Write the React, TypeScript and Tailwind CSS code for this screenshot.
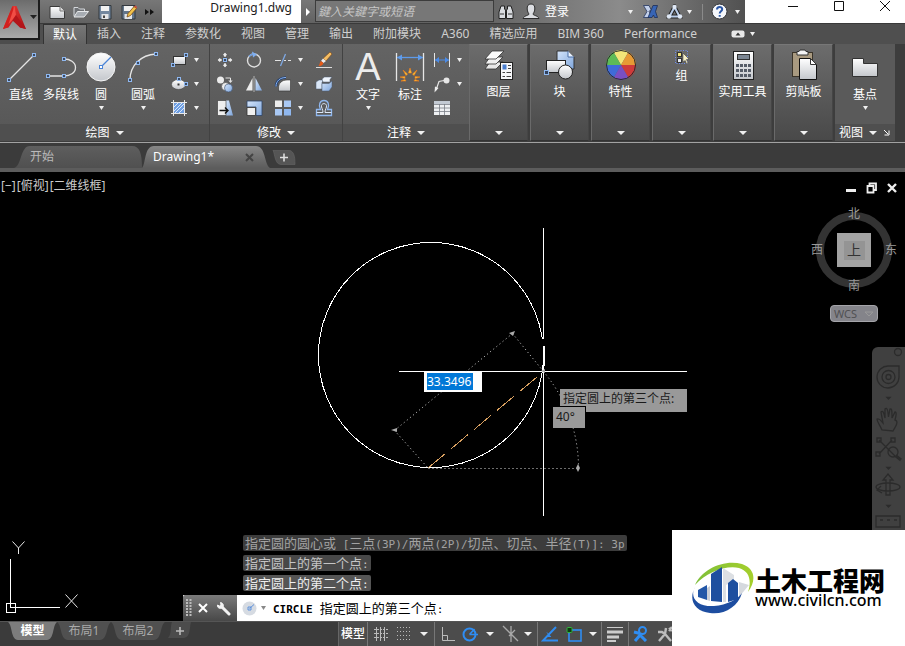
import type { ReactNode } from 'react';

type IconProps = { w?: number; h?: number; children: ReactNode };

function Icon({ w = 18, h = w, children }: IconProps) {
	return (
		<svg width={w} height={h} viewBox={`0 0 ${w} ${h}`} fill="none" className="shrink-0" aria-hidden="true">
			{children}
		</svg>
	);
}

function Caret({ size = 5, color = '#f0f0f0' }: { size?: number; color?: string }) {
	return (
		<svg width={size} height={4} viewBox="0 0 8 5" preserveAspectRatio="none" className="shrink-0" aria-hidden="true">
			<path d="M0 0H8L4 5Z" fill={color} />
		</svg>
	);
}

// Little square grip shown on the end points of drawing icons
function Grip({ x, y }: { x: number; y: number }) {
	return <rect x={x - 1.5} y={y - 1.5} width="3" height="3" fill="#3c4a60" stroke="#8fb8f0" />;
}

function Gradients() {
	return (
		<svg width="0" height="0" className="absolute" aria-hidden="true">
			<defs>
				<linearGradient id="pale" x1="0" y1="0" x2="0" y2="1">
					<stop offset="0" stopColor="#ffffff" />
					<stop offset="1" stopColor="#c4c7cc" />
				</linearGradient>
				<linearGradient id="blue" x1="0" y1="0" x2="1" y2="1">
					<stop offset="0" stopColor="#d5e5fa" />
					<stop offset="1" stopColor="#7fa6dc" />
				</linearGradient>
				<linearGradient id="red" x1="0" y1="0" x2="1" y2="1">
					<stop offset="0" stopColor="#f0403a" />
					<stop offset="1" stopColor="#a80f12" />
				</linearGradient>
				<linearGradient id="tabOn" x1="0" y1="0" x2="0" y2="1">
					<stop offset="0" stopColor="#878787" />
					<stop offset="1" stopColor="#5c5c5c" />
				</linearGradient>
				<linearGradient id="tabOff" x1="0" y1="0" x2="0" y2="1">
					<stop offset="0" stopColor="#5e5e5e" />
					<stop offset="1" stopColor="#505050" />
				</linearGradient>
				<linearGradient id="swoosh" x1="0" y1="0" x2="1" y2="0">
					<stop offset="0" stopColor="#7ebf3a" />
					<stop offset="1" stopColor="#a5cf2c" />
				</linearGradient>
			</defs>
		</svg>
	);
}

/* ---------- title bar ---------- */

const quickTools = [
	{
		label: '新建',
		icon: (
			<Icon w={16}>
				<path d="M1 2.500H11L15.500 7V14.500H1Z" fill="url(#pale)" stroke="#3a3a3a" />
				<path d="M11 2.500V7H15.500" fill="#ddd" stroke="#777" />
			</Icon>
		),
	},
	{
		label: '打开',
		icon: (
			<Icon w={16}>
				<path d="M1 12V3.500H5L6.500 5H11.500V7" fill="#6f7276" stroke="#d5d8dc" />
				<path d="M1 13L4.500 7.500H15.500L11 13Z" fill="#a7acb2" stroke="#e6e8ea" />
			</Icon>
		),
	},
	{
		label: '保存',
		icon: (
			<Icon w={16}>
				<path d="M2 1.500H14V15H2Z" fill="#72879f" stroke="#33383e" />
				<path d="M4 2H12V7H4Z" fill="#f1f1f1" />
				<path d="M4.500 10H11.500V15H4.500Z" fill="#e2e4e7" />
				<path d="M6 11.500H8V14H6Z" fill="#444" />
			</Icon>
		),
	},
	{
		label: '另存为',
		icon: (
			<Icon w={16}>
				<path d="M1 1.500H14V15H1Z" fill="#63758a" stroke="#33383e" />
				<path d="M3 2H12V7H3Z" fill="#f1f1f1" />
				<path d="M3.500 10H11V15H3.500Z" fill="#e2e4e7" />
				<path d="M6 13L7 9.500L13 2.500L15.500 4.500L9.500 11.500Z" fill="#f2c34b" stroke="#7a4a1a" strokeWidth=".8" />
				<path d="M13 2.500L15.500 4.500L16 3L14.500 1.500Z" fill="#d04a3a" />
			</Icon>
		),
	},
];

function TitleBar() {
	return (
		<div className="flex h-[23px] bg-linear-to-b from-[#777] to-[#626262] text-xs">
			<div className="flex w-[122px] shrink-0 items-center gap-2 pl-[9px]">
				{quickTools.map((t) => (
					<button key={t.label} aria-label={t.label}>
						{t.icon}
					</button>
				))}
				<button aria-label="更多">
					<Icon w={9} h={7}>
						<path d="M0 1L4 4L0 7ZM5 1L9 4L5 7Z" fill="#111" />
					</Icon>
				</button>
			</div>
			<h1 className="h-full w-[139px] shrink-0 bg-white pr-[9px] text-right leading-4 text-[#1c1c1c]">Drawing1.dwg</h1>
			<button className="flex w-[14px] shrink-0 items-center justify-center" aria-label="展开搜索">
				<Icon w={4} h={8}>
					<path d="M0 0L4 4L0 8Z" fill="#fff" />
				</Icon>
			</button>
			<input
				aria-label="搜索"
				placeholder="鍵入关鍵字或短语"
				className="h-[22px] w-[180px] border border-[#3c3c3c] bg-[#777] pl-[2px] italic placeholder-[#c6c6c6]"
			/>
			<div className="flex min-w-[251px] flex-1 items-center bg-linear-to-r from-[#666] via-[#8b8b8b] to-[#515151] pl-1">
				<button aria-label="搜索">
					<Icon w={16}>
						<path d="M3 2H6.500V5L7.500 6V14.500H1V8ZM9.500 2H13L15 8V14.500H8.500V6L9.500 5Z" fill="#d9dce0" stroke="#222" />
						<path d="M2 10H6M10 10H14M7 7H9" stroke="#333" />
					</Icon>
				</button>
				<button className="ml-2 flex flex-1 items-center gap-[5px] text-white">
					<Icon w={18} h={17}>
						<path
							d="M9 1C6 1 5 3 5.200 6C5.400 9 6.500 10 7 11C7 12.500 2 12.500 1 15.500H17C16 12.500 11 12.500 11 11C11.500 10 12.600 9 12.800 6C13 3 12 1 9 1Z"
							fill="#dcdee2"
							stroke="#2b2b2b"
						/>
					</Icon>
					<span className="flex-1 text-left leading-4">登录</span>
					<Caret />
				</button>
				<button className="ml-[10px]" aria-label="Exchange">
					<Icon w={15}>
						<path d="M.5 1.500H6L8 5.500L6 7.500L8 10L6 13.500H.5L4 7.500Z" fill="#c3d0ea" stroke="#24365f" strokeWidth=".8" />
						<path d="M14.500 1.500H10L5 13.500H9L10.500 11L11.500 13.500H14.500L12.500 7.500Z" fill="#3865b5" stroke="#1d2f57" strokeWidth=".8" />
					</Icon>
				</button>
				<button className="ml-2 flex items-center gap-1" aria-label="A360">
					<Icon w={17} h={16}>
						<path d="M8.500 3L3.500 12.500H13.500Z" stroke="#222" strokeWidth="4" />
						<path d="M8.500 3L3.500 12.500H13.500Z" stroke="#b9cdea" strokeWidth="2" />
						<circle cx="8.500" cy="3" r="2.200" fill="#dfe8f5" />
						<circle cx="3" cy="12.500" r="2.200" fill="#dfe8f5" />
						<circle cx="14" cy="12.500" r="2.200" fill="#dfe8f5" />
					</Icon>
					<Caret />
				</button>
				<span className="ml-[10px] h-4 w-px bg-[#8a8a8a]" />
				<button className="ml-2 flex items-center gap-[7px] pr-[5px]" aria-label="帮助">
					<Icon w={17}>
						<circle cx="8.500" cy="8.500" r="7.500" fill="#f4f6fa" stroke="#34353a" />
						<path d="M6 6.500C6 3.200 11.200 3.200 11.200 6.300C11.200 8.300 8.700 8.300 8.700 10.500M8.700 12V13.800" stroke="#2a56a5" strokeWidth="2" />
					</Icon>
					<Caret />
				</button>
			</div>
			<div className="flex w-40 shrink-0 items-start justify-end gap-[34px] bg-white pr-[14px]">
				<button aria-label="最小化">
					<Icon w={12}>
						<path d="M1 6.500H11" stroke="#111" />
					</Icon>
				</button>
				<button aria-label="最大化">
					<Icon w={12}>
						<path d="M1.500 1.500H10.500V10.500H1.500Z" stroke="#111" />
					</Icon>
				</button>
				<button aria-label="关闭">
					<Icon w={12}>
						<path d="M1 1L11 11M11 1L1 11" stroke="#111" />
					</Icon>
				</button>
			</div>
		</div>
	);
}

const menuTabs = ['默认', '插入', '注释', '参数化', '视图', '管理', '输出', '附加模块', 'A360', '精选应用', 'BIM 360', 'Performance'];

function Header() {
	return (
		<header className="flex bg-[#4d4d4d]">
			<button
				className="flex h-10 w-10 shrink-0 items-center gap-[3px] border-r-2 border-b-2 border-[#1c1c1c] bg-linear-to-b from-[#6c6c6c] to-[#aaa] pb-1 pl-[2px]"
				aria-label="应用程序菜单"
			>
				<Icon w={25} h={27}>
					<path d="M1 25L10.500 2H14.500L24 25L18 23.500L15.500 19L12.500 15L9.500 19L6.500 23.500Z" fill="url(#red)" />
					<path d="M10.500 2L12 8L6.500 23L1 25Z" fill="#d3201f" />
					<path d="M12.500 2L14 11L9.500 17L6.500 20Z" fill="#f24d45" />
					<path d="M14 11L24 25L18 23.500L10.500 16.500Z" fill="#b3151a" />
				</Icon>
				<Caret size={7} color="#222" />
			</button>
			<div className="min-w-0 flex-1">
				<TitleBar />
				<nav className="flex h-[21px] border-t border-[#3a3a3a] bg-[#4f4f4f] pl-[3px] text-xs text-[#cfcfcf]">
					{menuTabs.map((t, i) => (
						<button
							key={t}
							className={
								i === 0
									? 'h-5 border border-b-0 border-[#333] bg-linear-to-b from-[#777] to-[#646464] px-[9px] leading-[19px] text-white'
									: 'px-[10px] leading-5 whitespace-nowrap'
							}
						>
							{t}
						</button>
					))}
					<button className="ml-6 flex items-center gap-[5px]" aria-label="最小化功能区">
						<Icon w={14} h={8}>
							<rect x=".5" y=".5" width="13" height="7" rx="2" fill="#e9e9e9" />
							<path d="M4.500 5.500L7 2.500L9.500 5.500Z" fill="#333" />
						</Icon>
						<Caret />
					</button>
				</nav>
			</div>
		</header>
	);
}

/* ---------- ribbon ---------- */

function BigTool({ label, icon, caret, wide }: { label: string; icon: ReactNode; caret?: boolean; wide?: boolean }) {
	return (
		<button className={`${wide ? 'w-11' : 'w-10'} flex shrink-0 flex-col items-center`}>
			{icon}
			<span className="mt-1 text-xs leading-4 whitespace-nowrap">{label}</span>
			{caret && (
				<span className="mt-[3px] flex">
					<Caret />
				</span>
			)}
		</button>
	);
}

function SmallTool({ label, icon, caret }: { label: string; icon: ReactNode; caret?: boolean }) {
	return (
		<button className="flex h-6 items-center gap-[6px]" aria-label={label}>
			{icon}
			{caret && <Caret />}
		</button>
	);
}

function PanelTitle({ children }: { children: string }) {
	return (
		<button className="flex h-[17px] w-full items-center justify-center gap-[6px] bg-[#4f4f4f] text-xs leading-[17px]">
			{children}
			<Caret size={8} />
		</button>
	);
}

const lineIcon = (
	<Icon w={32}>
		<path d="M4 29L29 4" stroke="#e4e4e4" strokeWidth="1.300" />
		<Grip x={4} y={29} />
		<Grip x={29} y={4} />
	</Icon>
);

const polylineIcon = (
	<Icon w={32}>
		<path d="M3 25H19C25 25 30.500 22 30.500 16.500C30.500 11 25 8 19 8" stroke="#e4e4e4" strokeWidth="1.300" />
		<Grip x={3} y={25} />
		<Grip x={19} y={25} />
		<Grip x={19} y={8} />
	</Icon>
);

const circleIcon = (
	<Icon w={32}>
		<circle cx="16" cy="16" r="14" fill="url(#pale)" stroke="#f5f5f5" />
		<path d="M16 16L26 6" stroke="#4a84d8" strokeWidth="1.300" />
		<rect x="14.500" y="14.500" width="3" height="3" fill="#fff" stroke="#4a84d8" />
	</Icon>
);

const arcIcon = (
	<Icon w={32}>
		<path d="M3 29C3 14 14 4 29 3" stroke="#e4e4e4" strokeWidth="1.300" />
		<Grip x={3} y={29} />
		<Grip x={11} y={12} />
		<Grip x={29} y={3} />
	</Icon>
);

const rectIcon = (
	<Icon>
		<rect x="3.500" y="5.500" width="12" height="8" fill="url(#pale)" stroke="#333" />
		<Grip x={3} y={14} />
		<Grip x={16} y={4} />
	</Icon>
);

const ellipseIcon = (
	<Icon>
		<ellipse cx="8.500" cy="9.500" rx="7" ry="5" fill="url(#pale)" stroke="#444" strokeWidth=".6" />
		<rect x="7.500" y="8.500" width="2" height="2" fill="#333" />
		<Grip x={9} y={4} />
		<Grip x={16} y={9} />
	</Icon>
);

const hatchIcon = (
	<Icon>
		<rect x="3.500" y="4" width="11" height="10" fill="#6f9fe2" />
		<path d="M4 8L8 4M4 12L12 4M5 14L14 5M9 14L14 9" stroke="#dce9fb" />
		<path d="M3.500 1V17M14.500 1V17M1 3.500H17M1 14.500H17" stroke="#e8e8e8" />
	</Icon>
);

const moveIcon = (
	<Icon>
		<path
			d="M9 1L12 4.500H10.500V6H7.500V4.500H6ZM9 17L6 13.500H7.500V12H10.500V13.500H12ZM1 9L4.500 6V7.500H6V10.500H4.500V12ZM17 9L13.500 12V10.500H12V7.500H13.500V6Z"
			fill="#e9e9e9"
			stroke="#333"
			strokeWidth=".5"
		/>
		<Grip x={9} y={9} />
	</Icon>
);

const rotateIcon = (
	<Icon>
		<circle cx="9" cy="9.500" r="6.500" stroke="#dedede" strokeWidth="1.400" />
		<path d="M4 5.500A6.500 6.500 0 0 1 9 3" stroke="#6e9ddf" strokeWidth="1.600" />
		<path d="M7 .5L12 3.500L8 6.500Z" fill="#7eaef0" />
	</Icon>
);

const trimIcon = (
	<Icon>
		<path d="M1 9.500H7M10 9.500H12M14 9.500H17" stroke="#e3e3e3" />
		<path d="M11.500 3L6.500 15" stroke="#7fa9e4" strokeWidth="1.300" />
	</Icon>
);

const eraseIcon = (
	<Icon>
		<path d="M1 16.500H17" stroke="#ddd" />
		<path d="M15 1L17 3L11 10L8 7.500Z" fill="#f4bd63" stroke="#7b4517" strokeWidth=".6" />
		<path d="M8 7.500L11 10L8.500 12L6 10Z" fill="#eee" />
		<path d="M6 10L8.500 12C8 14.500 5.500 15 3.500 15C5 13.500 4.500 11 6 10Z" fill="#e65b19" />
	</Icon>
);

const copyIcon = (
	<Icon>
		<circle cx="4.500" cy="5" r="3.500" fill="#ececec" />
		<circle cx="9.500" cy="11.500" r="4" fill="#ececec" stroke="#444" strokeWidth=".6" />
		<circle cx="12.500" cy="13" r="4" fill="url(#blue)" stroke="#3d4f6b" strokeWidth=".6" />
		<path d="M9.500 3H14.500V6" stroke="#e4e4e4" />
		<path d="M12.300 5.500H16.700L14.500 8Z" fill="#e4e4e4" />
	</Icon>
);

const mirrorIcon = (
	<Icon>
		<path d="M7.500 3V15.500H1Z" fill="#ececec" />
		<path d="M10.500 3V15.500H17Z" fill="url(#blue)" />
		<path d="M9 1V17" stroke="#c8c8c8" strokeWidth=".8" />
	</Icon>
);

const filletIcon = (
	<Icon>
		<path d="M4.500 16V13C4.500 8 8 5 13 5H16.500V16Z" fill="url(#pale)" stroke="#333" strokeWidth=".6" />
		<path d="M2 11.500C2 6 6 2.500 12 2.500" stroke="#233f6e" strokeWidth="2.400" />
		<path d="M2 11.500C2 6 6 2.500 12 2.500" stroke="#8ab3ee" />
	</Icon>
);

const explodeIcon = (
	<Icon>
		<path d="M1 7L4 5H9L7 7V14H1Z" fill="#d9e6f7" stroke="#4a5a70" strokeWidth=".5" />
		<path d="M7 4L9.500 2H17L15 4.500V7H8Z" fill="#eff5fd" stroke="#4a5a70" strokeWidth=".5" />
		<path d="M7 8.500H14L17 6V12L14 16H7Z" fill="url(#blue)" stroke="#4a5a70" strokeWidth=".5" />
	</Icon>
);

const stretchIcon = (
	<Icon>
		<path d="M10 1.500H13L17 16.500H10Z" fill="url(#blue)" />
		<path d="M1.500 1.500H10V16.500H1.500Z" fill="#eee" stroke="#333" strokeWidth=".6" />
		<path d="M3.500 11.500H11M9 8.500L12 11.500L9 14.500" stroke="#111" strokeWidth="1.400" />
	</Icon>
);

const scaleIcon = (
	<Icon>
		<path d="M2 2H17V16.500H11V8H2Z" fill="url(#blue)" stroke="#2f4467" strokeWidth=".8" />
		<path d="M2 8.500H10.500V16.500H2Z" fill="#f0f0f0" stroke="#333" strokeWidth=".8" />
	</Icon>
);

const arrayIcon = (
	<Icon>
		<rect x="1" y="1.500" width="7" height="6.500" fill="#ececec" />
		<rect x="10" y="1.500" width="7" height="6.500" fill="#a9c8f3" />
		<rect x="1" y="10" width="7" height="6.500" fill="#a9c8f3" />
		<rect x="10" y="10" width="7" height="6.500" fill="#8fb7ee" />
	</Icon>
);

const offsetIcon = (
	<Icon>
		<path d="M1.500 16.500H16.500V10.500H12.500C15 6 13 1.500 9 1.500C5 1.500 3 6 5.500 10.500H1.500Z" stroke="#8fb7ee" strokeWidth="1.300" />
		<path d="M1.500 13.500H8C8 10 6 8.500 6.500 6.500C7 4 11 4 11.500 6.500C12 8.500 10 10 10 13.500H16.500" stroke="#dbe7f8" />
	</Icon>
);

const dimensionIcon = (
	<Icon w={32}>
		<path d="M2.500 2V30M29.500 2V30" stroke="#e6e6e6" strokeWidth="1.300" />
		<path d="M3 6.500H29" stroke="#5e9bea" strokeWidth="1.300" />
		<path d="M3 6.500L8 3.500V9.500ZM29 6.500L24 3.500V9.500Z" fill="#5e9bea" />
		<path
			d="M16 17L17.500 22H14.500ZM9 19L13.500 23L12 24.500ZM23 19L20 24.500L18.500 23ZM6 26L11 25.500V27.500ZM26 26L21 25.500V27.500ZM7 30L11 28.500L12 30ZM25 30L21 28.500L20 30Z"
			fill="#ffd23c"
			stroke="#e8791c"
			strokeWidth=".7"
		/>
	</Icon>
);

const linearIcon = (
	<Icon>
		<path d="M1.500 2V16M16.500 2V16" stroke="#e6e6e6" />
		<path d="M2 9H16" stroke="#4b8be6" />
		<path d="M2 9L6 6V12ZM16 9L12 6V12Z" fill="#4b8be6" />
	</Icon>
);

const leaderIcon = (
	<Icon>
		<path d="M3 15L6 6.500L11 5.500" stroke="#e6e6e6" strokeWidth="1.200" />
		<path d="M1.500 17.500L2 11.500L5.500 13Z" fill="#eee" />
		<circle cx="13.500" cy="5.500" r="3" fill="#e6e6e6" />
	</Icon>
);

const tableIcon = (
	<Icon>
		<rect x="1" y="2" width="16" height="14" fill="#eef0f2" />
		<path d="M1 5.500H17M1 9H17M1 12.500H17M6.500 5V16M11.500 5V16" stroke="#7a7f86" strokeWidth=".8" />
		<rect x="1" y="2" width="16" height="3" fill="#c3cad3" />
	</Icon>
);

const drawSmall = [
	{ label: '矩形', icon: rectIcon },
	{ label: '椭圆', icon: ellipseIcon },
	{ label: '图案填充', icon: hatchIcon },
];

const modifyTools = [
	{ label: '移动', icon: moveIcon },
	{ label: '旋转', icon: rotateIcon },
	{ label: '修剪', icon: trimIcon, caret: true },
	{ label: '删除', icon: eraseIcon },
	{ label: '复制', icon: copyIcon },
	{ label: '镜像', icon: mirrorIcon },
	{ label: '圆角', icon: filletIcon, caret: true },
	{ label: '分解', icon: explodeIcon },
	{ label: '拉伸', icon: stretchIcon },
	{ label: '缩放', icon: scaleIcon },
	{ label: '阵列', icon: arrayIcon, caret: true },
	{ label: '偏移', icon: offsetIcon },
];

const panels = [
	{
		label: '图层',
		icon: (
			<Icon w={32}>
				<path d="M2 20L7 13H20L13 20Z" fill="#e8e8e8" stroke="#333" strokeWidth=".8" />
				<path d="M2 15L7 8H20L13 15Z" fill="#f0f0f0" stroke="#333" strokeWidth=".8" />
				<path d="M2 10L9 2H21L13 10Z" fill="#fafafa" stroke="#333" strokeWidth=".8" />
				<rect x="17.500" y="13.500" width="12" height="17" fill="#f6f7f9" stroke="#222" />
				<rect x="19.500" y="15.500" width="4" height="5" fill="#4a7fd0" />
				<path d="M25 16.500H28M25 19.500H28M19.500 23.500H22M23.500 23.500H28M19.500 27.500H22M23.500 27.500H28" stroke="#444" />
			</Icon>
		),
	},
	{
		label: '块',
		icon: (
			<Icon w={32}>
				<path d="M13 2H24L30 8V20H13Z" fill="url(#blue)" stroke="#333" />
				<path d="M24 2V8H30" fill="#eaf2fd" stroke="#4a6fa5" />
				<rect x="2.500" y="11.500" width="19" height="12" fill="url(#pale)" stroke="#222" />
				<circle cx="21.500" cy="23" r="7" fill="url(#pale)" stroke="#222" />
				<rect x=".5" y="21.500" width="4" height="4" fill="#31415c" stroke="#8fb8f0" />
			</Icon>
		),
	},
	{
		label: '特性',
		icon: (
			<Icon w={32}>
				<path d="M16 16L8.500 3A15 15 0 0 1 23.500 3Z" fill="#f2e678" />
				<path d="M16 16L23.500 3A15 15 0 0 1 31 16Z" fill="#e79a35" />
				<path d="M16 16H31A15 15 0 0 1 23.500 29Z" fill="#cf3a3a" />
				<path d="M16 16L23.500 29A15 15 0 0 1 8.500 29Z" fill="#7a4fc2" />
				<path d="M16 16L8.500 29A15 15 0 0 1 1 16Z" fill="#3f6bd8" />
				<path d="M16 16H1A15 15 0 0 1 8.500 3Z" fill="#5dbb56" />
				<circle cx="16" cy="16" r="14.500" stroke="#2b2b2b" />
			</Icon>
		),
	},
	{
		label: '组',
		icon: (
			<Icon w={16}>
				<rect x="1.500" y="1.500" width="12" height="13" stroke="#6f8ff0" strokeDasharray="1 1.500" />
				<rect x="3.500" y="3.500" width="4" height="4" fill="#f1e27a" stroke="#333" />
				<rect x="3.500" y="9.500" width="4" height="4" fill="#e9edf2" stroke="#333" />
				<path d="M9 4L15 10L12.500 10.500L14 14L12.500 14.700L11.200 11.500L9 13Z" fill="#f5efc8" stroke="#333" strokeWidth=".5" />
			</Icon>
		),
	},
	{
		label: '实用工具',
		icon: (
			<Icon w={32}>
				<rect x="6.500" y="2.500" width="20" height="28" fill="url(#pale)" stroke="#222" />
				<rect x="10.500" y="5.500" width="12" height="5" fill="#7d8793" stroke="#333" />
				<path d="M9 16.500H24M9 21.500H24M9 26.500H24" stroke="#565d68" strokeWidth="3" strokeDasharray="3 1" />
			</Icon>
		),
	},
	{
		label: '剪贴板',
		icon: (
			<Icon w={32}>
				<rect x="4.500" y="3.500" width="20" height="24" fill="#a99a80" stroke="#3b3429" />
				<path d="M9 6V2.500H11L12 1H17L18 2.500H20V6Z" fill="#f4f4f4" stroke="#333" />
				<path d="M11.500 9.500H22.500L28.500 15.500V30.500H11.500Z" fill="url(#pale)" stroke="#111" />
				<path d="M22.500 9.500V15.500H28.500Z" fill="#fff" stroke="#333" />
			</Icon>
		),
	},
];

function Ribbon() {
	return (
		<section className="flex h-[99px] border-b border-[#a2a2a2] bg-[#3d3d3d] pb-px text-white">
			<div className="flex w-[210px] shrink-0 flex-col border-r border-[#424242] bg-linear-to-b from-[#646464] to-[#565656]">
				<div className="flex flex-1 pt-[7px] pl-px">
					<BigTool label="直线" icon={lineIcon} />
					<BigTool label="多段线" icon={polylineIcon} />
					<BigTool label="圆" icon={circleIcon} caret />
					<BigTool label="圆弧" icon={arcIcon} caret wide />
					<div className="-mt-[3px] ml-[5px]">
						{drawSmall.map((t) => (
							<SmallTool key={t.label} {...t} caret />
						))}
					</div>
				</div>
				<PanelTitle>绘图</PanelTitle>
			</div>

			<div className="flex w-[133px] shrink-0 flex-col border-r border-[#424242] bg-linear-to-b from-[#646464] to-[#565656]">
				<div className="grid flex-1 grid-cols-[29px_29px_41px_18px] content-start pt-1 pl-[6px]">
					{modifyTools.map((t) => (
						<SmallTool key={t.label} {...t} />
					))}
				</div>
				<PanelTitle>修改</PanelTitle>
			</div>

			<div className="flex w-[126px] shrink-0 flex-col bg-linear-to-b from-[#646464] to-[#565656]">
				<div className="flex flex-1 pt-[7px] pl-[5px]">
					<BigTool label="文字" icon={<span className="h-8 font-['Liberation_Sans'] text-[38px] leading-8 text-[#ececec]">A</span>} caret />
					<BigTool label="标注" icon={dimensionIcon} wide />
					<div className="-mt-[3px] ml-px">
						<SmallTool label="线性" icon={linearIcon} caret />
						<SmallTool label="引线" icon={leaderIcon} caret />
						<SmallTool label="表格" icon={tableIcon} />
					</div>
				</div>
				<PanelTitle>注释</PanelTitle>
			</div>

			{panels.map((p) => (
				<button
					key={p.label}
					className="mr-[2px] flex w-[59px] shrink-0 flex-col items-center border border-t-[#777] border-r-[#454545] border-b-[#333] border-l-[#6a6a6a] bg-linear-to-b from-[#6c6c6c] to-[#494949] pt-1 pb-[5px]"
				>
					{p.icon}
					<span className="mt-[3px] flex-1 text-xs leading-4 whitespace-nowrap">{p.label}</span>
					<Caret size={8} />
				</button>
			))}

			<div className="flex w-[60px] shrink-0 flex-col bg-[#5a5a5a]">
				<div className="flex flex-1 justify-center pt-[7px]">
					<BigTool
						label="基点"
						icon={
							<Icon w={32}>
								<path d="M3.500 7.500H14.500V12.500H28.500V25.500H3.500Z" fill="url(#pale)" stroke="#333" />
							</Icon>
						}
						caret
					/>
				</div>
				<button className="flex h-[17px] items-center gap-[6px] bg-[#4f4f4f] pl-1 text-xs leading-[17px]">
					视图
					<Caret size={8} />
					<Icon w={7}>
						<path d="M1 1L5 5M6 1.500V6H1.500" stroke="#fff" />
					</Icon>
				</button>
			</div>
		</section>
	);
}

function FileTabs() {
	return (
		<nav className="flex h-[29px] items-start border-b-4 border-[#5c5c5c] bg-[#3b3b3b] pt-[3px] pl-[14px] text-xs">
			<button className="relative h-[22px] w-[128px] text-left text-[#b9b9b9]">
				<svg className="absolute inset-0 h-full w-full" viewBox="0 0 128 22" preserveAspectRatio="none" aria-hidden="true">
					<path d="M0 22C8 20 6 0 16 0H118C126 0 128 8 128 22Z" fill="url(#tabOff)" />
				</svg>
				<span className="relative pl-4 leading-[22px]">开始</span>
			</button>
			<button className="relative flex h-[22px] w-[128px] items-center justify-between pr-4 pl-[11px] text-white">
				<svg className="absolute inset-0 h-full w-full" viewBox="0 0 128 22" preserveAspectRatio="none" aria-hidden="true">
					<path d="M0 22C4 18 2 0 12 0H114C124 0 122 18 128 22Z" fill="url(#tabOn)" />
				</svg>
				<span className="relative">Drawing1*</span>
				<span className="relative">
					<Icon w={9}>
						<path d="M1 1L8 8M8 1L1 8" stroke="#444" strokeWidth="2" />
					</Icon>
				</span>
			</button>
			<button className="mt-1 ml-[2px] h-[15px]" aria-label="新图形">
				<Icon w={24} h={15}>
					<path d="M1 0H15C22 0 23 6 23 14.500H9C3 14.500 3 5 1 0Z" fill="#555" stroke="#666" strokeWidth=".6" />
					<path d="M8 7.500H16M12 3.500V11.500" stroke="#ddd" strokeWidth="1.600" />
				</Icon>
			</button>
		</nav>
	);
}

/* ---------- model space ---------- */

function Drawing() {
	return (
		<svg className="absolute top-0 left-0" width="700" height="449" viewBox="0 1 700 449" fill="none" aria-hidden="true">
			<g shapeRendering="crispEdges">
				<circle cx="431" cy="184" r="112.500" stroke="#fff" />
				<path d="M543.500 57V345M399 200.500H687" stroke="#fff" />
				<path d="M540 168H547V175H540Z" fill="#000" />
				<path d="M544 175V195" stroke="#fff" strokeWidth="2" />
				<path d="M428 297L543 201" stroke="#d9a060" strokeDasharray="22 8" />
			</g>
			<path
				d="M394.500 259.500L512.500 162.500M394.500 259.500L428.500 297.500M512.500 162.500L543.500 200.500M428.500 297.500H578.500M543.500 200.500A150 150 0 0 1 578.500 297.500"
				stroke="#d8d8d8"
				strokeDasharray="1 3"
			/>
			<path d="M391 259L397 257V261ZM509 162L515 160L513 165ZM541 200L545 198V202Z" fill="#aaa" />
			<path d="M578 293L580 297L578 301L576 297Z" fill="#aaa" />
			<path d="M10.500 388V436.500H60M6.500 432.500H15.500V441.500H6.500Z" stroke="#fff" shapeRendering="crispEdges" />
			<path d="M12.500 370.500L18.500 377L24.500 370.500M18.500 377V383M65.500 423.500L77.500 436.500M77.500 423.500L65.500 436.500" stroke="#e8e8e8" />
		</svg>
	);
}

function ViewCube() {
	return (
		<div className="absolute top-[35px] right-[8px] grid w-[86px] justify-items-center text-xs leading-[14px] text-[#9a9a9a]">
			<svg className="absolute top-0 left-0" width="86" height="86" viewBox="0 0 86 86" aria-hidden="true">
				<circle cx="43" cy="43" r="34" fill="none" stroke="#333" strokeWidth="8" />
			</svg>
			<span className="relative">北</span>
			<div className="relative flex h-[58px] w-full items-center justify-between">
				<span>西</span>
				<button className="flex h-[34px] w-[34px] items-center justify-center bg-[#a3a3a3]">
					<span className="h-[19px] w-[21px] bg-[#949494] text-sm leading-[18px] text-[#333]">上</span>
				</button>
				<span>东</span>
			</div>
			<span className="relative">南</span>
			<button className="mt-3 flex h-[17px] w-12 items-center justify-between rounded-sm border border-[#a5a5aa] bg-[#84848a] px-[3px] text-[11px] leading-none text-[#505052]">
				WCS
				<Icon w={10} h={6}>
					<path d="M1 1H9L5 5Z" stroke="#999" />
				</Icon>
			</button>
		</div>
	);
}

function NavBar() {
	return (
		<aside className="absolute top-[175px] right-0 bottom-0 w-[33px] rounded-tl-md bg-[#404040]">
			<svg width="33" height="190" viewBox="0 0 33 190" fill="none" stroke="#2b2b2b" strokeWidth="1.300" aria-hidden="true">
				<circle cx="26" cy="5" r="3.500" />
				<path d="M16.500 19H27V30A11 11 0 1 1 16.500 19Z" />
				<circle cx="16.500" cy="30" r="6.500" />
				<circle cx="16.500" cy="30" r="2.500" />
				<path d="M10 83C8 78 5 75 5 72C8 71 9 74 11 76L9 65C11 63 12 66 13 71L13 62C15 60 16 63 16.500 70L18 62C20 61 20 64 20 71L23 65C25 65 24 69 23 73C27 74 24 79 21 84Z" />
				<path d="M7 93L23 109M20 93L7 107M5 91H9V95H5ZM19 91H23V95H19ZM4 105H8V109H4Z" />
				<circle cx="21" cy="105" r="5" />
				<path d="M24 109L29 113" strokeWidth="3" />
				<ellipse cx="16" cy="140" rx="12" ry="4" />
				<path d="M14 148V133H11L16 127L21 133H18V148ZM9 139L5 143L10 146" />
				<path d="M4 169H28V180H4ZM8 173H11M15 173H18M22 173H25M4 184H28" />
				<path d="M15 50.500H18L16.500 52ZM15 120.500H18L16.500 122ZM15 158.500H18L16.500 160Z" fill="#2b2b2b" />
			</svg>
		</aside>
	);
}

// Chinese glyphs are full width in the command window, ASCII takes half a cell
function CommandText({ text }: { text: string }) {
	return (
		<>
			{text.split(/([\x20-\x7e]+)/).map((part, i) =>
				i % 2 ? (
					<span key={i} className="font-['DejaVu_Sans_Mono',monospace] text-[11px] whitespace-pre">
						{part}
					</span>
				) : (
					part
				),
			)}
		</>
	);
}

function CommandWindow() {
	return (
		<div className="absolute right-0 bottom-0 left-[183px] font-['Noto_Sans_CJK_SC',sans-serif] text-[13px]">
			<div className="mb-1 ml-[60px] flex flex-col items-start gap-1 leading-4">
				<p className="h-4 rounded-xs bg-[#3c3c3c] px-[2px] text-[#a2a2a2]">
					<CommandText text="指定圆的圆心或 [三点(3P)/两点(2P)/切点、切点、半径(T)]: 3p" />
				</p>
				<p className="h-4 rounded-xs bg-[#484848] px-[2px] text-[#c4c4c4]">
					<CommandText text="指定圆上的第一个点:" />
				</p>
				<p className="h-4 rounded-xs bg-[#555] px-[2px] text-[#eee]">
					<CommandText text="指定圆上的第二个点:" />
				</p>
			</div>
			<div className="flex h-[26px] items-stretch bg-white">
				<div className="flex w-[54px] items-center gap-[6px] rounded-tl-xs bg-linear-to-b from-[#7b7b7b] to-[#484848] pl-[3px]">
					<Icon w={6} h={18}>
						<path d="M1 0V18M4.500 0V18" stroke="#bbb" strokeWidth="2" strokeDasharray="2 1" />
					</Icon>
					<button aria-label="关闭">
						<Icon w={10}>
							<path d="M1 1L9 9M9 1L1 9" stroke="#fff" strokeWidth="2" />
						</Icon>
					</button>
					<button aria-label="自定义" className="ml-[2px]">
						<Icon w={15}>
							<path d="M6 6L13 13" stroke="#f2f2f2" strokeWidth="3" strokeLinecap="round" />
							<path d="M4.500 1.500L5 4L3.500 5L1.500 4C1 7 4 8 6 7C8 6 8 2 4.500 1.500Z" fill="#f2f2f2" stroke="#f2f2f2" />
						</Icon>
					</button>
				</div>
				<button className="flex items-center gap-1 pl-[5px]" aria-label="最近使用的命令">
					<Icon w={15}>
						<circle cx="7.500" cy="7.500" r="7" fill="#d6dbe2" />
						<path d="M7.500 7.500L12 3.500M6 6H9V9H6Z" stroke="#5f92dc" />
					</Icon>
					<Caret color="#888" />
				</button>
				<p className="ml-[7px] leading-[25px] text-black">
					<b className="mr-[7px] font-['DejaVu_Sans_Mono',monospace] text-[11px]">CIRCLE</b>
					<CommandText text="指定圆上的第三个点:" />
				</p>
			</div>
		</div>
	);
}

function ModelSpace() {
	return (
		<main className="relative min-h-[449px] flex-1 overflow-hidden bg-black">
			<Drawing />
			<div className="relative flex items-start justify-between pt-[6px] pr-2 pl-px text-xs leading-4 text-[#ccc]">
				<div className="flex gap-px">
					<button>[−]</button>
					<button>[俯视]</button>
					<button>[二维线框]</button>
				</div>
				<div className="flex h-5 items-center gap-[10px]">
					<button aria-label="最小化视口">
						<Icon w={10} h={12}>
							<path d="M0 8.500H10" stroke="#eee" strokeWidth="3" />
						</Icon>
					</button>
					<button aria-label="还原视口">
						<Icon w={11} h={12}>
							<path d="M3.500 3.500V1.500H10V8H8M1.500 4H7.500V10.500H1.500Z" stroke="#eee" strokeWidth="1.800" />
						</Icon>
					</button>
					<button aria-label="关闭视口">
						<Icon w={10} h={12}>
							<path d="M1 2L9 10M9 2L1 10" stroke="#eee" strokeWidth="2.400" />
						</Icon>
					</button>
				</div>
			</div>

			<div className="absolute top-[200px] left-[424px] h-5 w-[58px] bg-white py-px pl-[3px]">
				<input
					aria-label="长度"
					defaultValue="33.3496"
					className="block h-[17px] w-[46px] bg-[#0078d7] font-['Noto_Sans'] text-xs leading-[17px] text-white"
				/>
			</div>
			<div className="absolute top-[217px] left-[560px] h-[23px] w-[127px] bg-[#999] pl-[3px] text-xs leading-5 text-[#1a1a1a]">指定圆上的第三个点:</div>
			<div className="absolute top-[234px] left-[553px] h-[22px] w-[33px] border-t border-r border-black bg-[#999] pl-[3px] text-xs leading-[19px] text-[#1a1a1a]">40°</div>

			<ViewCube />
			<NavBar />
			<CommandWindow />
		</main>
	);
}

/* ---------- status bar ---------- */

const layouts = ['模型', '布局1', '布局2'];

function LayoutTabs() {
	return (
		<nav className="flex w-[338px] shrink-0 items-start pl-2 text-xs">
			{layouts.map((l, i) => (
				<button key={l} className={i === 0 ? 'relative h-[18px] w-[49px] text-white' : 'relative h-[18px] w-[54px] text-[#aaa]'}>
					<svg className="absolute inset-0 h-full w-full" viewBox="0 0 54 18" preserveAspectRatio="none" aria-hidden="true">
						<path d="M0 0H54C49 3 51 18 43 18H11C3 18 5 3 0 0Z" fill={i === 0 ? '#7c7c7c' : '#505050'} />
					</svg>
					<span className={i === 0 ? 'relative leading-[18px] font-bold' : 'relative leading-[18px]'}>{l}</span>
				</button>
			))}
			<button aria-label="新布局" className="ml-[2px]">
				<Icon w={25} h={17}>
					<path d="M5 0H24C22 8 24 16 15 16H1C5 12 3 4 5 0Z" fill="#4c4c4c" />
					<path d="M9 9H17M13 5V13" stroke="#bbb" strokeWidth="1.600" />
				</Icon>
			</button>
		</nav>
	);
}

function StatusBar() {
	return (
		<footer className="flex h-[25px] border-t border-[#555] bg-[#3b3b3b] text-xs text-white">
			<LayoutTabs />
			<div className="flex flex-1 divide-x divide-[#777] border-l border-[#666] bg-[#4c4c4c]">
				<button className="w-[29px] shrink-0 leading-6 font-medium">模型</button>
				<div className="flex w-[67px] shrink-0 items-center gap-[7px] pl-[5px]">
					<button aria-label="栅格">
						<Icon w={16}>
							<path d="M3.500 1V15M7.500 1V15M11.500 1V15" stroke="#bbb" />
							<path d="M1 3.500H15M1 7.500H15M1 11.500H15" stroke="#bbb" strokeDasharray="2 1" />
						</Icon>
					</button>
					<button aria-label="捕捉" className="flex items-center gap-2">
						<Icon w={16}>
							<path d="M1 1.500H15M1 5.500H15M1 9.500H15M1 13.500H15" stroke="#bbb" strokeDasharray="1 2" />
						</Icon>
						<Caret size={8} />
					</button>
				</div>
				<div className="flex w-[103px] shrink-0 items-center pl-[6px]">
					<button aria-label="正交">
						<Icon w={15} h={16}>
							<path d="M1.500 1V14.500H14M1.500 9.500H6.500V14" stroke="#bbb" />
						</Icon>
					</button>
					<button aria-label="极轴追踪" className="ml-[6px] flex items-center gap-2">
						<Icon w={16}>
							<circle cx="7.500" cy="8.500" r="6" stroke="#2f8df2" strokeWidth="2" />
							<path d="M7.500 8.500H16M7.500 8.500L12.500 3" stroke="#2f8df2" strokeWidth="1.600" />
						</Icon>
						<Caret size={8} />
					</button>
					<button aria-label="等轴测草图" className="ml-2 flex items-center gap-1">
						<Icon w={18}>
							<path d="M1 1L16 16M9 1V17M7 11L13 5" stroke="#a9a9a9" strokeWidth="1.300" />
						</Icon>
						<Caret size={8} />
					</button>
				</div>
				<div className="flex w-[64px] shrink-0 items-center gap-[7px] pl-[3px]">
					<button aria-label="对象捕捉追踪">
						<Icon w={18} h={16}>
							<path d="M15 1L2 14.500H17" stroke="#2f8df2" strokeWidth="2" />
							<path d="M6 6.500L10 11M6 10.500H9" stroke="#2f8df2" />
						</Icon>
					</button>
					<button aria-label="对象捕捉" className="flex items-center gap-[6px]">
						<Icon w={17}>
							<rect x="3" y="4" width="12" height="11" stroke="#2f8df2" strokeWidth="1.600" />
							<rect x="1" y="1.500" width="5" height="5" rx="1" fill="#0f3a12" stroke="#31b53a" />
						</Icon>
						<Caret size={8} />
					</button>
				</div>
				<button className="w-[27px] shrink-0 pl-[5px]" aria-label="线宽">
					<Icon w={16}>
						<path d="M0 1.500H16" stroke="#ccc" />
						<path d="M0 6H16" stroke="#ccc" strokeWidth="3" />
						<path d="M0 11H12" stroke="#ccc" strokeWidth="3" />
						<path d="M0 15H9" stroke="#ccc" strokeWidth="2" />
					</Icon>
				</button>
				<div className="flex items-center gap-2 pl-1">
					<button aria-label="注释可见性">
						<Icon w={16}>
							<path d="M8 8L2 15M7 9L13 15M1 6L5 7L8 8" stroke="#2f8df2" strokeWidth="3" />
							<circle cx="9.500" cy="4.500" r="3.500" fill="#4c4c4c" stroke="#2f8df2" strokeWidth="2" />
						</Icon>
					</button>
					<button aria-label="自动缩放">
						<Icon w={16}>
							<path d="M8 8L2 15M8 8L14 15M1 6L5 6L8 8L9 2M12 2L15 5M15 1L12 5" stroke="#bdbdbd" strokeWidth="2.400" />
						</Icon>
					</button>
				</div>
			</div>
		</footer>
	);
}

function SiteBadge() {
	return (
		<a href="http://www.civilcn.com" className="absolute right-0 bottom-0 flex h-[116px] w-[233px] items-center bg-white pl-5 text-black">
			<Icon w={63} h={54}>
				<path d="M3 24C10 8 32 -2 50 3C64 8 64 20 56 31C60 19 57 10 47 7C34 4 15 11 3 24Z" fill="url(#swoosh)" />
				<path d="M6 29L15 24V39L6 36Z" fill="#2257a8" />
				<path d="M19 13L30 6V41L19 40Z" fill="#1e4f9f" />
				<path d="M31 7L42 14V20L34 24V41H31Z" fill="#dcdfe3" />
				<path d="M36 22L41 18L46 22V38L36 41Z" fill="#1e4f9f" />
				<path d="M47 21L57 24L47 36Z" fill="#d5d9de" />
				<path d="M15 27L18 25V40L15 39Z" fill="#c9ced6" />
				<path d="M3 26C-3 37 6 46 22 45C35 44 46 38 50 32C46 46 32 54 18 52C3 50 -4 40 3 26Z" fill="#1d4da0" />
			</Icon>
			<span className="font-['Noto_Sans_CJK_SC',sans-serif]">
				<strong className="block text-[26px] leading-6 font-black">土木工程网</strong>
				<span className="block font-['Noto_Sans'] text-base leading-4 font-medium">www.civilcn.com</span>
			</span>
		</a>
	);
}

export default function App() {
	return (
		<div className="relative flex min-h-screen flex-col overflow-hidden bg-[#3b3b3b] font-['Noto_Sans','Noto_Sans_CJK_SC',sans-serif]">
			<Gradients />
			<Header />
			<Ribbon />
			<FileTabs />
			<ModelSpace />
			<StatusBar />
			<SiteBadge />
		</div>
	);
}
